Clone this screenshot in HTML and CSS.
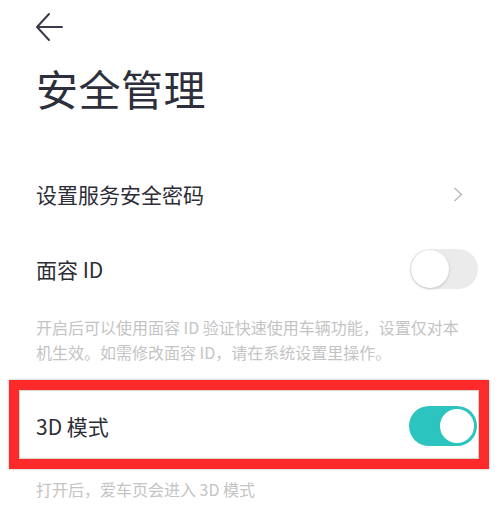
FILE: index.html
```html
<!DOCTYPE html>
<html lang="zh-CN">
<head>
    <meta charset="UTF-8">
    <title>安全管理</title>
    <link rel="stylesheet" href="styles.css">
</head>
<body>
    <!-- Top bar -->
    <div class="topbar">
        <svg class="back" width="28" height="32" viewBox="0 0 28 32">
            <path d="M27 16H2M14 3L2 16L14 29" fill="none" stroke="#3a3b48" stroke-width="2" stroke-linecap="round" stroke-linejoin="round"/>
        </svg>
    </div>

    <h1 class="title">安全管理</h1>

    <!-- Settings list -->
    <div class="list">
        <div class="row">
            <span class="label">设置服务安全密码</span>
            <svg class="chevron" width="10" height="15" viewBox="0 0 10 15">
                <path d="M1.5 1L8.5 7.5L1.5 14" fill="none" stroke="#b8b8b8" stroke-width="1.4"/>
            </svg>
        </div>
        <div class="row">
            <span class="label">面容 ID</span>
            <span class="toggle"><span class="knob"></span></span>
        </div>
    </div>
    <p class="desc">开启后可以使用面容 ID 验证快速使用车辆功能，设置仅对本机生效。如需修改面容 ID，请在系统设置里操作。</p>

    <!-- Highlighted row -->
    <div class="highlight">
        <div class="highlight-inner">
            <span class="label">3D 模式</span>
            <span class="toggle on"><span class="knob"></span></span>
        </div>
    </div>
    <p class="note">打开后，爱车页会进入 3D 模式</p>
</body>
</html>
```

FILE: styles.css
```css
* {
    margin: 0;
    padding: 0;
    box-sizing: border-box;
    font-family: "Noto Sans CJK SC", "Noto Sans", sans-serif;
}

body {
    background: #fff;
    width: 501px;
    color: #2c2d36;
}

.topbar {
    height: 60px;
    padding: 11px 0 0 35px;
}

.back {
    display: block;
}

.title {
    font-size: 42px;
    font-weight: 400;
    line-height: 56px;
    padding-left: 36px;
    color: #2d2f3d;
    letter-spacing: 0.5px;
}

/* Settings rows */
.list {
    margin-top: 40px;
}

.row {
    height: 75px;
    display: flex;
    align-items: center;
    justify-content: space-between;
    padding: 0 23px 0 36px;
}

.label {
    font-size: 21px;
    color: #2c2d36;
}

.chevron {
    margin-right: 15px;
    margin-top: 2px;
}

.toggle {
    width: 68px;
    height: 40px;
    border-radius: 20px;
    background: #ebebeb;
    display: flex;
    align-items: center;
    padding: 1px;
}

.knob {
    width: 38px;
    height: 38px;
    border-radius: 50%;
    background: #fff;
    box-shadow: 0 1px 3px rgba(0, 0, 0, 0.18);
}

.toggle.on {
    background: #2bc4bf;
    justify-content: flex-end;
}

.toggle.on .knob {
    border: 2px solid #2bc4bf;
    box-shadow: none;
}

.desc {
    font-size: 16px;
    line-height: 25px;
    color: #c4c4c4;
    padding: 0 34px 0 36px;
    margin-top: 9px;
}

/* Red highlight frame */
.highlight {
    margin: 15px 12px 0 9px;
    border: 10px solid #fc2a2a;
    box-shadow: 0 0 2px rgba(0, 0, 0, 0.35);
}

.highlight-inner {
    height: 69px;
    display: flex;
    align-items: center;
    justify-content: space-between;
    padding: 3px 1px 0 16px;
    border: 1px solid #d6d4c6;
    background: #fff;
}

.note {
    font-size: 16px;
    line-height: 24px;
    color: #c4c4c4;
    padding-left: 36px;
    margin-top: 8px;
}
```
